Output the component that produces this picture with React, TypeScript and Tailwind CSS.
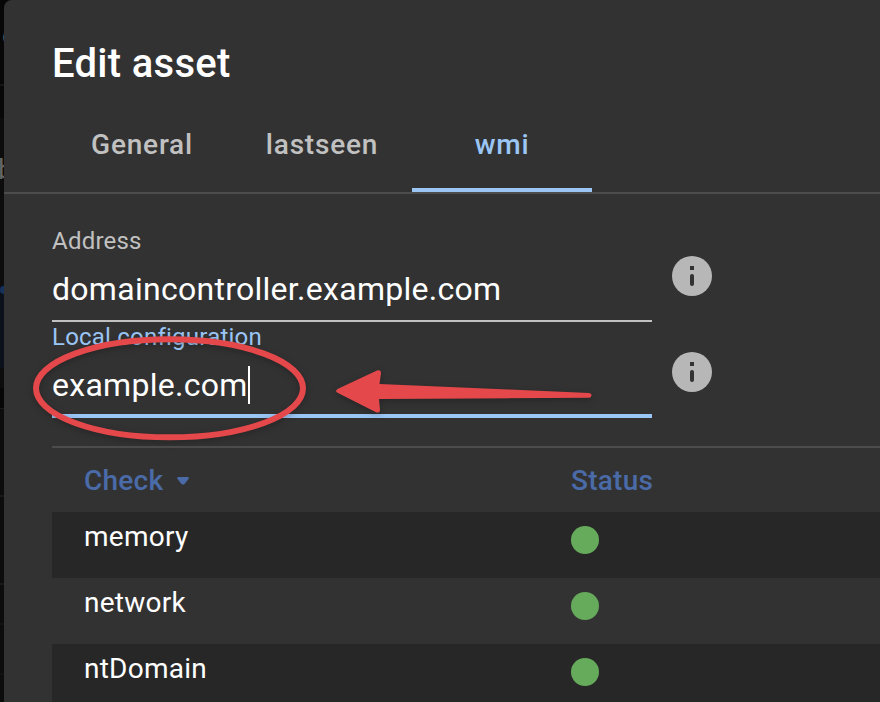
import React from "react";

const checks = ["memory", "network", "ntDomain"];

function InfoIcon() {
  return (
    <svg className="block h-10 w-10" viewBox="0 0 40 40">
      <circle cx="20" cy="20" r="20" fill="#b7b7b7" />
      <rect x="18" y="10" width="4" height="4" fill="#323232" />
      <rect x="18" y="18" width="4" height="12" rx="2" fill="#323232" />
    </svg>
  );
}

function Backdrop() {
  return (
    <div className="flex w-1 shrink-0 flex-col overflow-hidden bg-[#0c0c0c] text-[28px] leading-8 text-[#656565]">
      <div className="h-[84px] shrink-0 bg-[#070707] pt-5">
        <span className="ml-[2px] block">o</span>
      </div>
      <div className="h-0.5 shrink-0 bg-[#141414]" />
      <div className="h-8 shrink-0 bg-[#070707]" />
      <div className="h-[167px] shrink-0 pt-[36px]">
        <span className="-ml-[2px] block">b</span>
      </div>
      <div className="h-[83px] shrink-0 bg-[#0b111b] pt-px">
        <div className="h-2 w-2 rounded-full bg-[#17315d]" />
      </div>
      <div className="h-5 shrink-0" />
      <div className="h-5 shrink-0 bg-[#060606]" />
      <div className="h-[87px] shrink-0 border-t border-[#1a1a1a]" />
      <div className="h-[88px] shrink-0 border-t-2 border-[#181818]" />
      <div className="h-10 shrink-0 border-t-2 border-[#181818]" />
      <div className="h-[50px] shrink-0 border-t-2 border-[#121212]" />
      <div className="h-[30px] shrink-0 border-t-2 border-[#121212]" />
    </div>
  );
}

function Tab({ label, active = false }: { label: string; active?: boolean }) {
  return (
    <div
      className={
        "flex h-24 w-[180px] items-center justify-center border-b-4 pt-1.5 text-[28px] font-medium tracking-[0.8px] " +
        (active ? "border-[#9ac5f4] text-[#9ac5f4]" : "border-transparent text-[#c1c1c1]")
      }
    >
      {label}
    </div>
  );
}

function Field({ label, value, focused = false }: { label: string; value: string; focused?: boolean }) {
  return (
    <div className="flex h-24 shrink-0 gap-5">
      <div
        className={
          "flex h-24 w-[600px] flex-col " +
          (focused ? "border-b-4 border-[#9ac5f4]" : "border-b-2 border-[#c1c1c1]")
        }
      >
        <div
          className={
            "h-8 shrink-0 text-2xl leading-[30px] tracking-[0.22px] whitespace-nowrap " +
            (focused ? "text-[#9ac5f4]" : "text-[#c1c1c1]")
          }
        >
          {label}
        </div>
        <div className="flex h-[60px] shrink-0 items-center pt-0.5 text-[32px] leading-9 tracking-[0.28px] text-white">
          <span>{value}</span>
          {focused && <span className="h-[38px] w-0.5 bg-white" />}
        </div>
      </div>
      <div className="pt-[30px]">
        <InfoIcon />
      </div>
    </div>
  );
}

/** Hand-drawn style callout that points at the local configuration field. */
function Annotation() {
  return (
    <svg
      className="pointer-events-none absolute top-0 left-0 h-[702px] w-[880px] [filter:drop-shadow(0_2px_3px_rgba(0,0,0,0.25))]"
      viewBox="0 0 880 702"
    >
      <ellipse cx="169.5" cy="388.3" rx="133.5" ry="49" fill="none" stroke="#e5484b" strokeWidth="6" />
      <path
        d="M338 388.7 L377 370.5 Q381 369.5 381 373 L379.5 384 L589 393 Q592 393.5 591.5 395.5 Q591 397.7 589 397.7 L379 399 L380 410 Q380 413 376.5 412.5 L338 393 Q334 391 338 388.7 Z"
        fill="#e5484b"
      />
    </svg>
  );
}

export default function App() {
  return (
    <div className="relative flex h-[702px] w-[880px] overflow-hidden bg-[#070707] font-['Roboto',sans-serif] antialiased">
      <Backdrop />
      <main className="flex flex-1 flex-col rounded-tl-lg bg-[#323232]">
        <h1 className="mt-8 h-16 shrink-0 pl-12 text-[40px] leading-[63px] font-medium tracking-[0.3px] text-white">
          Edit asset
        </h1>
        <nav className="flex h-[98px] shrink-0 border-b-2 border-[#4c4c4c] pl-12">
          <Tab label="General" />
          <Tab label="lastseen" />
          <Tab label="wmi" active />
        </nav>
        <section className="flex shrink-0 flex-col pt-8 pl-12">
          <Field label="Address" value="domaincontroller.example.com" />
          <Field label="Local configuration" value="example.com" focused />
        </section>
        <section className="mt-7 ml-12 shrink-0 border-t-2 border-[#4c4c4c]">
          <div className="flex h-16 items-center pt-0.5 pl-8 text-[28px] font-medium tracking-[0.25px] text-[#4a6ba8]">
            <div className="flex w-[487px] items-center gap-3.5">
              <span>Check</span>
              <svg className="mb-px h-2 w-3" viewBox="0 0 12 8">
                <path d="M1 0 H11 Q12.5 .5 11.5 2 L7.5 7 Q6 8 4.5 7 L.5 2 Q-.5 .5 1 0Z" fill="#4a6ba8" />
              </svg>
            </div>
            <span>Status</span>
          </div>
          {checks.map((name) => (
            <div key={name} className="flex h-[66px] pl-8 odd:bg-[#323232] even:bg-[#272727]">
              <span className="w-[487px] pt-1 text-[28px] leading-[41px] tracking-[0.25px] text-white">{name}</span>
              <span className="mt-3.5 h-7 w-7 rounded-full bg-[#66ab5b]" />
            </div>
          ))}
        </section>
      </main>
      <Annotation />
    </div>
  );
}
